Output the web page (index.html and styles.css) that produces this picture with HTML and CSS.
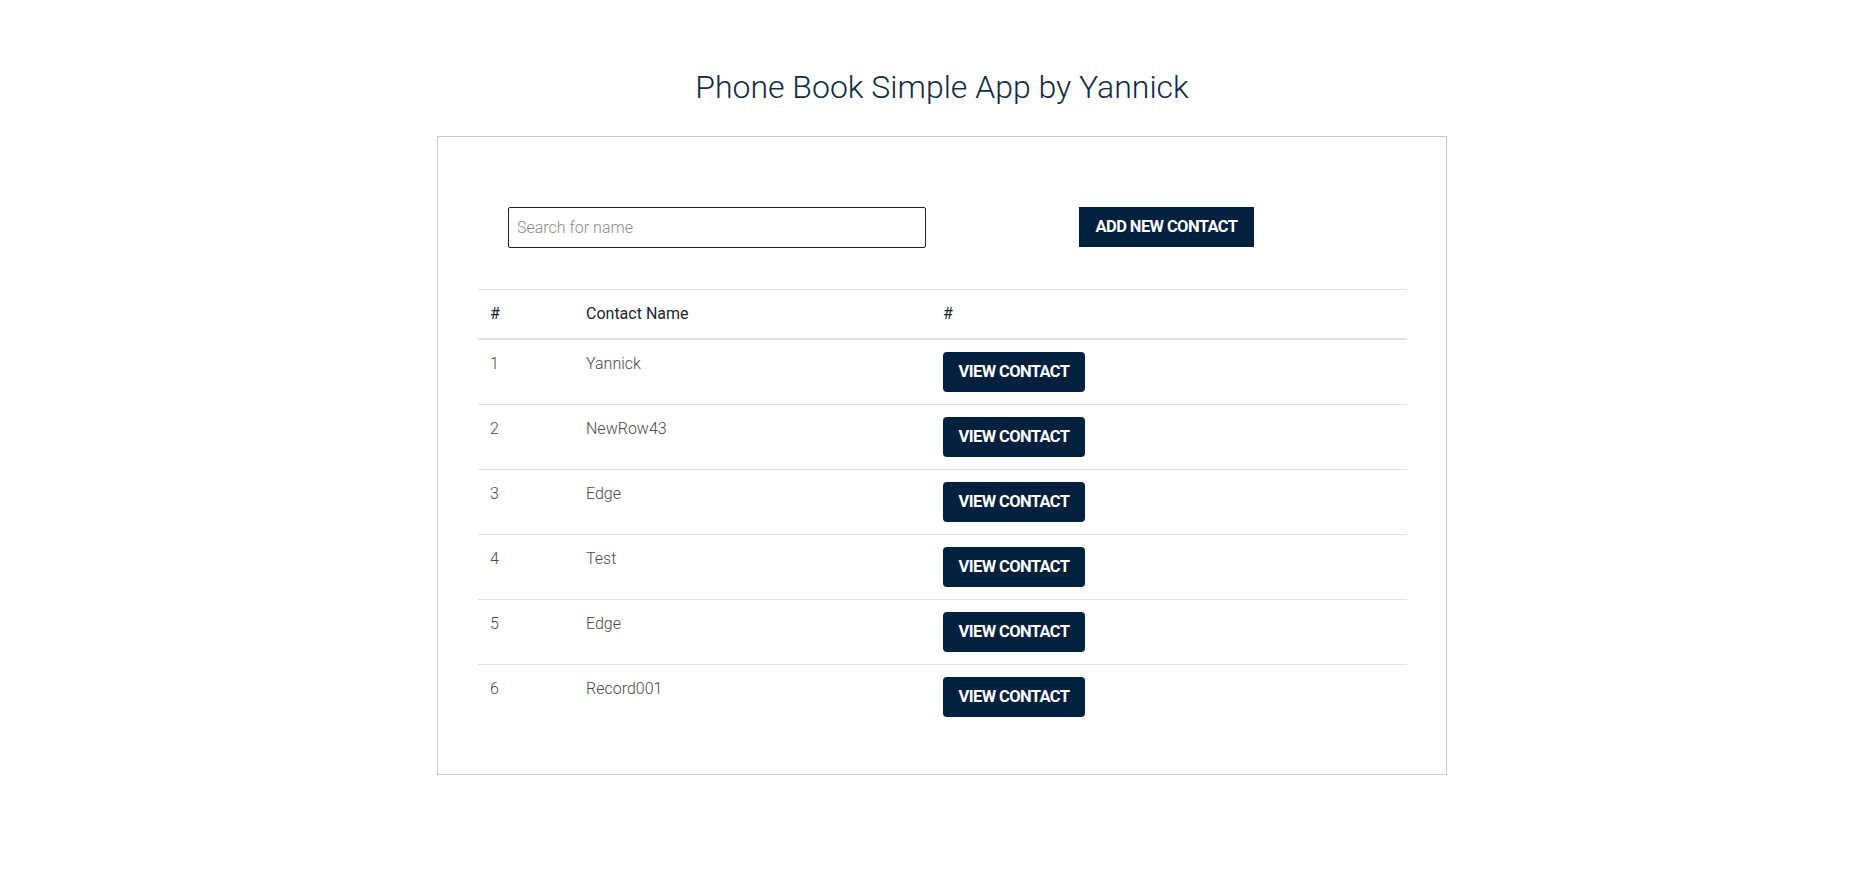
FILE: index.html
```html
<!DOCTYPE html>
<html lang="en">
<head>
<meta charset="utf-8">
<title>Phone Book Simple App</title>
<link rel="stylesheet" href="styles.css">
</head>
<body>
<div class="page">
  <h1 class="title">Phone Book Simple App by Yannick</h1>
  <div class="card">
    <div class="toolbar">
      <input class="search" type="text" placeholder="Search for name">
      <button class="btn btn-add" type="button">ADD NEW CONTACT</button>
    </div>
    <table class="contacts">
      <thead>
        <tr>
          <th class="col-id">#</th>
          <th class="col-name">Contact Name</th>
          <th class="col-action">#</th>
        </tr>
      </thead>
      <tbody>
        <tr><td>1</td><td>Yannick</td><td><button class="btn btn-view" type="button">VIEW CONTACT</button></td></tr>
        <tr><td>2</td><td>NewRow43</td><td><button class="btn btn-view" type="button">VIEW CONTACT</button></td></tr>
        <tr><td>3</td><td>Edge</td><td><button class="btn btn-view" type="button">VIEW CONTACT</button></td></tr>
        <tr><td>4</td><td>Test</td><td><button class="btn btn-view" type="button">VIEW CONTACT</button></td></tr>
        <tr><td>5</td><td>Edge</td><td><button class="btn btn-view" type="button">VIEW CONTACT</button></td></tr>
        <tr><td>6</td><td>Record001</td><td><button class="btn btn-view" type="button">VIEW CONTACT</button></td></tr>
      </tbody>
    </table>
  </div>
</div>
</body>
</html>
```

FILE: styles.css
```css
* { box-sizing: border-box; }
html, body { margin: 0; padding: 0; background: #fff; }
body {
  font-family: Roboto, "Liberation Sans", Arial, sans-serif;
  font-weight: 300;
  font-size: 16px;
  line-height: 24px;
  color: #444;
}
.page {
  padding: 68px 0 0 24px;
}
.title {
  margin: 0 0 30px;
  text-align: center;
  font-size: 32px;
  line-height: 38px;
  font-weight: 300;
  color: #102a47;
}
.card {
  width: 1010px;
  margin: 0 auto;
  border: 1px solid #c9c9c9;
  padding: 40px 39px 45px 40px;
}
.toolbar {
  display: flex;
  align-items: flex-start;
  margin: 30px 0 41px 30px;
}
.search {
  width: 418px;
  height: 41px;
  border: 1px solid #222;
  border-radius: 2px;
  padding: 0 8px;
  font-family: Roboto, "Liberation Sans", Arial, sans-serif;
  font-weight: 300;
  font-size: 16px;
  color: #333;
  outline: none;
}
.search::placeholder { color: #8a8a8a; }
.btn {
  font-family: Roboto, "Liberation Sans", Arial, sans-serif;
  font-weight: 700;
  font-size: 16.5px;
  color: #fff;
  background: #03203f;
  border: none;
  cursor: pointer;
  letter-spacing: -0.6px;
  padding: 0 0 1px;
}
.btn-add {
  margin-left: 153px;
  width: 175px;
  height: 40px;
  border-radius: 0;
}
.btn-view {
  width: 142px;
  height: 40px;
  border-radius: 4px;
}
.contacts {
  width: 100%;
  border-collapse: collapse;
  margin: 0;
}
.contacts th, .contacts td {
  text-align: left;
  vertical-align: top;
  padding: 12px;
  border-top: 1px solid #dee2e6;
}
.contacts th {
  font-weight: 400;
  color: #212529;
  border-bottom: 2px solid #dee2e6;
}
.contacts td { font-weight: 300; color: #4a4a4a; }
.col-id { width: 96px; }
.col-name { width: 357px; }
```
